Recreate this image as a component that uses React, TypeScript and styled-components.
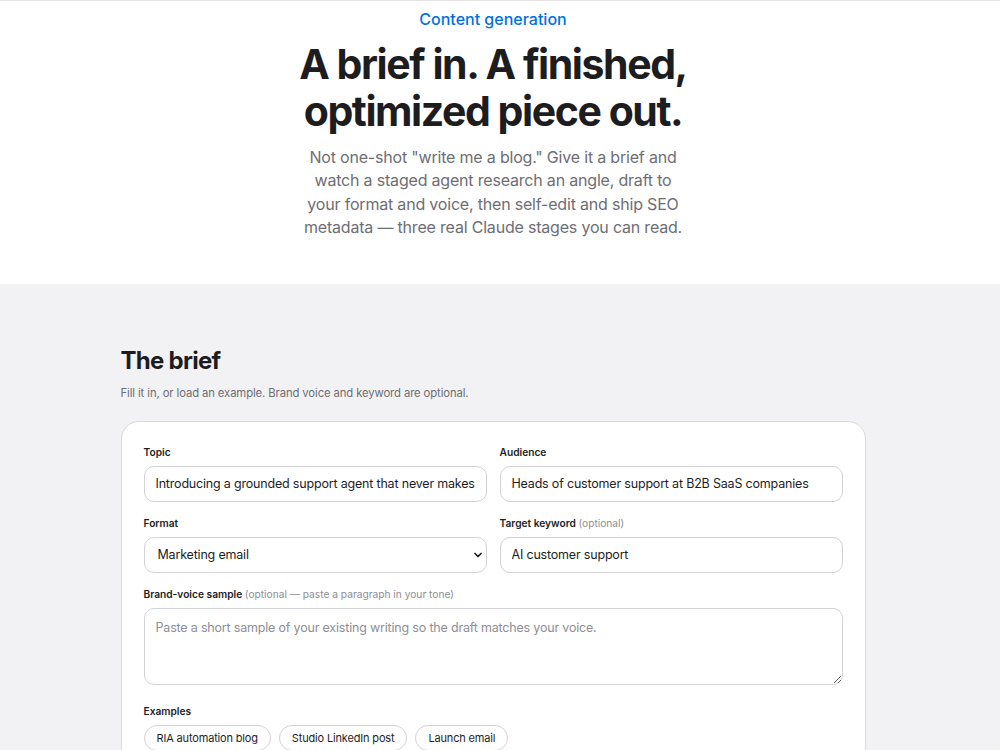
import { useState } from 'react';
import styled, { createGlobalStyle } from 'styled-components';

const GlobalStyle = createGlobalStyle`
  html, body {
    margin: 0;
    padding: 0;
    background: #fff;
  }
  body {
    font-family: Inter, 'Noto Sans', Arial, sans-serif;
    color: #1d1d1f;
    -webkit-font-smoothing: antialiased;
    border-top: 1px solid #e3e3e6;
  }
`;

const Hero = styled.header`
  background: #fff;
  padding: 8px 14px 44px 0;
  text-align: center;

  .eyebrow {
    color: #0071e3;
    font-size: 16px;
    font-weight: 500;
    margin: 0 0 12px;
    line-height: 20px;
  }

  h1 {
    font-size: 41px;
    line-height: 47px;
    font-weight: 700;
    letter-spacing: -0.035em;
    margin: 0 auto 11px;
    color: #1d1d1f;
  }

  .lede {
    font-size: 16px;
    line-height: 23.4px;
    letter-spacing: -0.012em;
    color: #6e6e73;
    max-width: 390px;
    margin: 0 auto;
  }
`;

const Section = styled.section`
  background: #f2f2f4;
  padding: 62px 14px 80px 0;
  min-height: 600px;
`;

const Wrap = styled.div`
  width: 745px;
  margin: 0 auto;

  h2 {
    font-size: 24px;
    font-weight: 700;
    letter-spacing: -0.03em;
    line-height: 30px;
    margin: 0 0 10px;
  }

  .sub {
    font-size: 11.3px;
    letter-spacing: -0.01em;
    color: #6e6e73;
    margin: 0 0 21px;
  }
`;

const Card = styled.form`
  background: #fff;
  border: 1px solid #d9d9dd;
  border-radius: 18px;
  padding: 24px 22px 24px;
  display: flex;
  flex-direction: column;
  gap: 15px;
`;

const Grid = styled.div`
  display: grid;
  grid-template-columns: 1fr 1fr;
  column-gap: 13px;
  row-gap: 15px;
`;

const Field = styled.label<{ $spaced?: boolean }>`
  display: flex;
  flex-direction: column;
  gap: 7px;
  margin-top: ${(p) => (p.$spaced ? '5px' : '0')};
`;

const Label = styled.span`
  font-size: 10.2px;
  font-weight: 600;
  color: #1d1d1f;
  line-height: 13px;

  em {
    font-style: normal;
    font-weight: 400;
    color: #8e8e93;
  }
`;

const controlBase = `
  box-sizing: border-box;
  width: 100%;
  font-family: Inter, 'Noto Sans', Arial, sans-serif;
  font-size: 12.5px;
  letter-spacing: -0.015em;
  color: #1d1d1f;
  background: #fff;
  border: 1px solid #d2d2d7;
  border-radius: 10px;
  outline: none;
`;

const Input = styled.input`
  ${controlBase}
  height: 36px;
  padding: 0 11px;
`;

const SelectBox = styled.div`
  position: relative;

  svg {
    position: absolute;
    right: 4px;
    top: 50%;
    transform: translateY(-50%);
    pointer-events: none;
  }
`;

const Select = styled.select`
  ${controlBase}
  height: 36px;
  padding: 0 30px 0 13px;
  appearance: none;
`;

const TextArea = styled.textarea`
  ${controlBase}
  height: 77px;
  padding: 10px 11px;
  resize: vertical;
  line-height: 18px;

  &::placeholder {
    color: #8e8e93;
  }
`;

const Chips = styled.div`
  display: flex;
  gap: 8px;
  flex-wrap: wrap;
`;

const Chip = styled.button<{ $active?: boolean }>`
  font-family: Inter, 'Noto Sans', Arial, sans-serif;
  font-size: 11px;
  letter-spacing: -0.015em;
  color: #1d1d1f;
  background: ${(p) => (p.$active ? '#e8f1fc' : '#fff')};
  border: 1px solid #d2d2d7;
  border-radius: 999px;
  height: 26px;
  padding: 0 12px;
  cursor: pointer;
`;

const Submit = styled.button`
  align-self: flex-start;
  font-family: Inter, 'Noto Sans', Arial, sans-serif;
  font-size: 14px;
  font-weight: 500;
  color: #fff;
  background: #0071e3;
  border: none;
  border-radius: 999px;
  padding: 10px 20px;
`;

const EXAMPLES = ['RIA automation blog', 'Studio LinkedIn post', 'Launch email'];

export default function App() {
  const [topic, setTopic] = useState(
    'Introducing a grounded support agent that never makes things up',
  );
  const [audience, setAudience] = useState(
    'Heads of customer support at B2B SaaS companies',
  );
  const [format, setFormat] = useState('email');
  const [keyword, setKeyword] = useState('AI customer support');
  const [voice, setVoice] = useState('');

  return (
    <>
      <GlobalStyle />
      <Hero>
        <p className="eyebrow">Content generation</p>
        <h1>
          A brief in. A finished,
          <br />
          optimized piece out.
        </h1>
        <p className="lede">
          Not one-shot "write me a blog." Give it a brief and watch a staged
          agent research an angle, draft to your format and voice, then
          self-edit and ship SEO metadata — three real Claude stages you can
          read.
        </p>
      </Hero>
      <Section>
        <Wrap>
          <h2>The brief</h2>
          <p className="sub">
            Fill it in, or load an example. Brand voice and keyword are
            optional.
          </p>
          <Card onSubmit={(e) => e.preventDefault()}>
            <Grid>
              <Field>
                <Label>Topic</Label>
                <Input value={topic} onChange={(e) => setTopic(e.target.value)} />
              </Field>
              <Field>
                <Label>Audience</Label>
                <Input
                  value={audience}
                  onChange={(e) => setAudience(e.target.value)}
                />
              </Field>
              <Field>
                <Label>Format</Label>
                <SelectBox>
                  <Select value={format} onChange={(e) => setFormat(e.target.value)}>
                    <option value="blog">Blog post</option>
                    <option value="linkedin">LinkedIn post</option>
                    <option value="email">Marketing email</option>
                  </Select>
                  <svg width="10" height="10" viewBox="0 0 10 10" fill="none">
                    <path
                      d="M2 3.5 5 6.5 8 3.5"
                      stroke="#1d1d1f"
                      strokeWidth="1.7"
                      strokeLinecap="round"
                      strokeLinejoin="round"
                    />
                  </svg>
                </SelectBox>
              </Field>
              <Field>
                <Label>
                  Target keyword <em>(optional)</em>
                </Label>
                <Input
                  value={keyword}
                  onChange={(e) => setKeyword(e.target.value)}
                />
              </Field>
            </Grid>
            <Field>
              <Label>
                Brand-voice sample{' '}
                <em>(optional — paste a paragraph in your tone)</em>
              </Label>
              <TextArea
                value={voice}
                onChange={(e) => setVoice(e.target.value)}
                placeholder="Paste a short sample of your existing writing so the draft matches your voice."
              />
            </Field>
            <Field as="div" $spaced>
              <Label>Examples</Label>
              <Chips>
                {EXAMPLES.map((ex) => (
                  <Chip type="button" key={ex}>
                    {ex}
                  </Chip>
                ))}
              </Chips>
            </Field>
            <Submit type="submit">Generate</Submit>
          </Card>
        </Wrap>
      </Section>
    </>
  );
}
